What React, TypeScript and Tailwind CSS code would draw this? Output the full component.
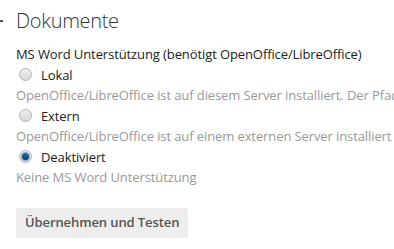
import React from "react";

type Option = {
  id: string;
  label: string;
  hint: string;
  checked?: boolean;
};

const options: Option[] = [
  {
    id: "local",
    label: "Lokal",
    hint: "OpenOffice/LibreOffice ist auf diesem Server installiert. Der Pfad zur Binärdatei wird automatisch erkannt.",
  },
  {
    id: "external",
    label: "Extern",
    hint: "OpenOffice/LibreOffice ist auf einem externen Server installiert und wird über die URL angesprochen.",
  },
  {
    id: "off",
    label: "Deaktiviert",
    hint: "Keine MS Word Unterstützung",
    checked: true,
  },
];

const Radio = ({ checked }: { checked?: boolean }) => (
  <span className="relative inline-flex h-[13px] w-[13px] shrink-0 items-center justify-center rounded-full border border-[#b4b4b4] bg-gradient-to-b from-[#eeeeee] to-[#d8d8d8]">
    {checked && (
      <span className="h-[7px] w-[7px] rounded-full bg-gradient-to-b from-[#1d6fb2] to-[#0a3a63] shadow-[0_0_0_1px_#7fb0d8]" />
    )}
  </span>
);

export default function App() {
  return (
    <div className="h-[249px] w-[394px] overflow-hidden bg-white font-['Open_Sans',sans-serif] text-[13px] tracking-[-0.1px]">
      <div className="relative pl-4 pt-[7px]">
        <span className="absolute left-0 top-[20px] h-[2px] w-[3px] bg-[#555]" />
        <h2 className="text-[20px] font-light leading-[28px] tracking-[-0.3px] text-[#333]">
          Dokumente
        </h2>
        <p className="mt-[9px] whitespace-nowrap leading-[20px] text-[#222]">
          MS Word Unterstützung (benötigt OpenOffice/LibreOffice)
        </p>
        <div className="flex flex-col">
          {options.map((o) => (
            <div key={o.id} className="flex flex-col">
              <label className="flex h-[21px] items-center gap-[9px] pl-[3px] text-[#222]">
                <Radio checked={o.checked} />
                <span className="leading-[20px]">{o.label}</span>
              </label>
              <em className="whitespace-nowrap not-italic leading-[20px] text-[#999]">
                {o.hint}
              </em>
            </div>
          ))}
        </div>
        <button className="mt-[21px] h-[30px] rounded-[3px] bg-[#ededed] px-[9px] text-[13px] font-semibold text-[#555]">
          Übernehmen und Testen
        </button>
      </div>
    </div>
  );
}
